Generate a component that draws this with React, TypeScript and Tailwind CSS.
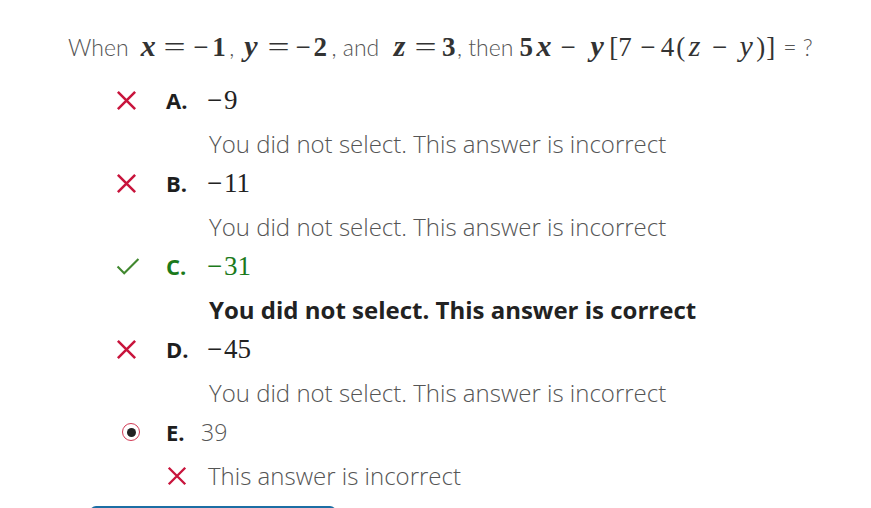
import React from 'react';

const serif = "font-['Liberation_Serif',serif]";

// math token
const M = ({ children, b = false, i = false, className = '' }: { children: React.ReactNode; b?: boolean; i?: boolean; className?: string }) => (
  <span className={`${serif} ${i ? 'text-[30px] italic' : 'text-[27px]'} text-[#333] ${b ? 'font-bold' : ''} ${className}`}>{children}</span>
);

// TeX-like wide equals sign and minus
const Eq = ({ className = '' }: { className?: string }) => (
  <span className={`${serif} text-[27px] text-[#333] inline-block w-[20px] text-center ${className}`}>
    <span className="inline-block scale-x-[1.45]">=</span>
  </span>
);
const Minus = ({ className = '' }: { className?: string }) => (
  <span className={`${serif} text-[27px] inline-block w-[15px] text-center ${className}`}>−</span>
);

function Cross({ className = '' }: { className?: string }) {
  return (
    <svg viewBox="0 0 24 24" className={className} fill="none" stroke="#c8143c" strokeWidth="2.6">
      <path d="M3 3L21 21M21 3L3 21" />
    </svg>
  );
}

function Check() {
  return (
    <svg viewBox="0 0 26 20" className="w-[26px] h-[19px]" fill="none" stroke="#41882f" strokeWidth="2.2">
      <path d="M2 10L9 17L24 2" />
    </svg>
  );
}

function Radio() {
  return (
    <div className="w-[18px] h-[18px] rounded-full border border-[#d23a55] flex items-center justify-center">
      <div className="w-[9px] h-[9px] rounded-full bg-[#222]" />
    </div>
  );
}

const Num = ({ n }: { n: string }) => (
  <span className="whitespace-nowrap">
    <Minus className="ml-[2px]" />
    <span className={`${serif} text-[27px] ml-[2px]`}>{n}</span>
  </span>
);

type Opt = { letter: string; value: React.ReactNode; status: 'wrong' | 'right' | 'picked' };

const options: Opt[] = [
  { letter: 'A.', value: <Num n="9" />, status: 'wrong' },
  { letter: 'B.', value: <Num n="11" />, status: 'wrong' },
  { letter: 'C.', value: <Num n="31" />, status: 'right' },
  { letter: 'D.', value: <Num n="45" />, status: 'wrong' },
  { letter: 'E.', value: <span className="ml-[-4px] text-[23px] font-light text-[#555]">39</span>, status: 'picked' },
];

export default function App() {
  return (
    <div className="w-[871px] h-[508px] overflow-hidden bg-white font-['Open_Sans',sans-serif]">
      <div className="ml-[68px] mt-[26px] h-[40px] leading-[40px] text-[23px] text-[#555] font-['Lato',sans-serif] font-light whitespace-nowrap">
        <span>When</span>
        <M b i className="ml-[12px]">x</M>
        <Eq className="ml-[9px]" />
        <Minus className="ml-[8.5px] text-[#333]" />
        <M b className="ml-[4px]">1</M>
        <span className="ml-[3.5px]">,</span>
        <M b i className="ml-[10px]">y</M>
        <Eq className="ml-[11px]" />
        <Minus className="ml-[7px] text-[#333]" />
        <M b className="ml-[3px]">2</M>
        <span className="ml-[4.5px]">, and</span>
        <M b i className="ml-[14.5px]">z</M>
        <Eq className="ml-[10.5px]" />
        <M b className="ml-[6px]">3</M>
        <span className="ml-[1.5px]">, then</span>
        <M b className="ml-[6px]">5</M>
        <M b i className="ml-[3.5px]">x</M>
        <Minus className="ml-[9px] text-[#333]" />
        <M b i className="ml-[15px]">y</M>
        <M className="ml-[5.5px]">[</M>
        <M>7</M>
        <Minus className="ml-[8.5px] text-[#333]" />
        <M className="ml-[5.5px]">4</M>
        <M className="ml-[2px]">(</M>
        <M i className="ml-[3.5px]">z</M>
        <Minus className="ml-[11.5px] text-[#333]" />
        <M i className="ml-[12.5px]">y</M>
        <M className="ml-[3.5px]">)</M>
        <M className="ml-[1px]">]</M>
        <span className="ml-[8px]">= ?</span>
      </div>

      <div className="ml-[115px] mt-[14px] flex flex-col">
        {options.map((o) => (
          <div key={o.letter} className="flex flex-col h-[83px]">
            <div className="h-[40px] flex items-center">
              <div className="w-[51px] flex items-center">
                {o.status === 'wrong' && <Cross className="w-[23px] h-[23px]" />}
                {o.status === 'right' && <Check />}
                {o.status === 'picked' && (
                  <div className="pl-[7px]">
                    <Radio />
                  </div>
                )}
              </div>
              <span className={`w-[39px] text-[22px] font-bold ${o.status === 'right' ? 'text-[#1b7a1b]' : 'text-[#1e1e1e]'}`}>
                {o.letter}
              </span>
              <span className={o.status === 'right' ? 'text-[#1b7a1b]' : 'text-[#222]'}>{o.value}</span>
            </div>
            <div className="h-[43px] pt-[5px] flex items-center pl-[51px]">
              {o.status === 'picked' ? (
                <div className="flex items-center gap-[20px]">
                  <Cross className="w-[22px] h-[22px]" />
                  <span className="text-[24px] font-light text-[#555]">This answer is incorrect</span>
                </div>
              ) : o.status === 'right' ? (
                <span className="pl-[43px] text-[24px] font-bold text-[#222]">You did not select. This answer is correct</span>
              ) : (
                <span className="pl-[43px] text-[24px] font-light text-[#555]">You did not select. This answer is incorrect</span>
              )}
            </div>
          </div>
        ))}
      </div>

      <div className="ml-[90px] mt-[11px] w-[246px] h-[40px] rounded-md bg-[#1c6ea4]" />
    </div>
  );
}
